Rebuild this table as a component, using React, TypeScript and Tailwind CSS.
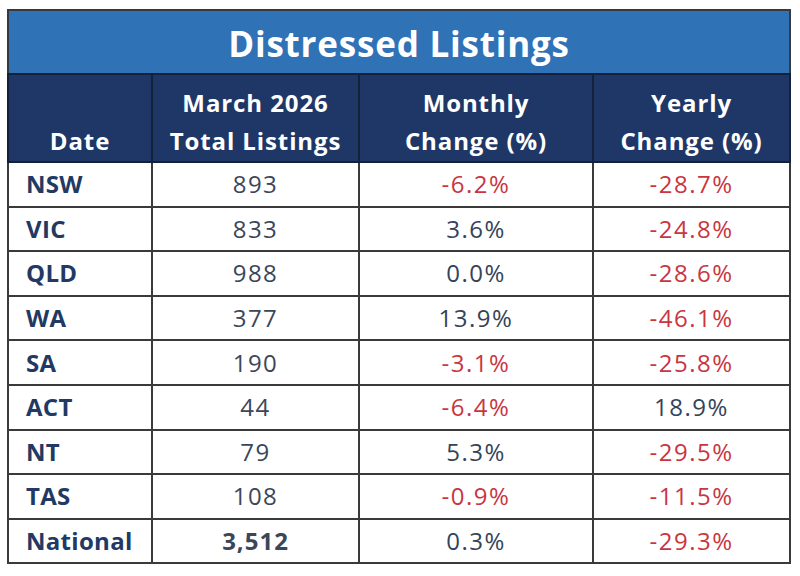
import React from "react";

type Row = { label: string; total: string; monthly: string; yearly: string; bold?: boolean };

const rows: Row[] = [
  { label: "NSW", total: "893", monthly: "-6.2%", yearly: "-28.7%" },
  { label: "VIC", total: "833", monthly: "3.6%", yearly: "-24.8%" },
  { label: "QLD", total: "988", monthly: "0.0%", yearly: "-28.6%" },
  { label: "WA", total: "377", monthly: "13.9%", yearly: "-46.1%" },
  { label: "SA", total: "190", monthly: "-3.1%", yearly: "-25.8%" },
  { label: "ACT", total: "44", monthly: "-6.4%", yearly: "18.9%" },
  { label: "NT", total: "79", monthly: "5.3%", yearly: "-29.5%" },
  { label: "TAS", total: "108", monthly: "-0.9%", yearly: "-11.5%" },
  { label: "National", total: "3,512", monthly: "0.3%", yearly: "-29.3%", bold: true },
];

function valClass(v: string) {
  return v.startsWith("-") ? "text-[#c9363f]" : "text-[#34435a]";
}

export default function App() {
  return (
    <div
      className="w-[800px] h-[576px] bg-white pt-[9px] pl-[7px]"
      style={{ fontFamily: '"Open Sans", "Noto Sans", sans-serif' }}
    >
      <table className="border-collapse w-[782px] table-fixed border-2 border-[#333a44]">
        <colgroup>
          <col className="w-[144px]" />
          <col className="w-[207px]" />
          <col className="w-[234px]" />
          <col className="w-[197px]" />
        </colgroup>
        <thead>
          <tr className="h-[64px] bg-[#2f72b6]">
            <th
              colSpan={4}
              className="text-white text-[35px] font-bold text-center align-middle pt-[4px] tracking-[0.8px]"
            >
              Distressed Listings
            </th>
          </tr>
          <tr className="h-[88px] bg-[#1e3766] text-white text-[24px] font-bold leading-[38px] tracking-[0.9px]">
            <th className="border-2 border-[#15213a] align-bottom pb-[1px] text-center">Date</th>
            <th className="border-2 border-[#15213a] align-bottom pb-[1px] text-center">
              March 2026
              <br />
              Total Listings
            </th>
            <th className="border-2 border-[#15213a] align-bottom pb-[1px] text-center">
              Monthly
              <br />
              Change (%)
            </th>
            <th className="border-2 border-[#15213a] align-bottom pb-[1px] text-center">
              Yearly
              <br />
              Change (%)
            </th>
          </tr>
        </thead>
        <tbody>
          {rows.map((r) => (
            <tr key={r.label} className="h-[44.6px] text-[24px] leading-[30px]">
              <td className="border-2 border-[#3a3a3a] pl-[17px] font-bold text-[#223a63] tracking-[0.3px]">
                {r.label}
              </td>
              <td
                className={
                  "border-2 border-[#3a3a3a] text-center text-[#3a475a] " +
                  (r.bold ? "font-bold tracking-[1px]" : "tracking-[1.5px]")
                }
              >
                {r.total}
              </td>
              <td className={"border-2 border-[#3a3a3a] text-center tracking-[1.5px] " + valClass(r.monthly)}>
                {r.monthly}
              </td>
              <td className={"border-2 border-[#3a3a3a] text-center tracking-[1.5px] " + valClass(r.yearly)}>
                {r.yearly}
              </td>
            </tr>
          ))}
        </tbody>
      </table>
    </div>
  );
}
